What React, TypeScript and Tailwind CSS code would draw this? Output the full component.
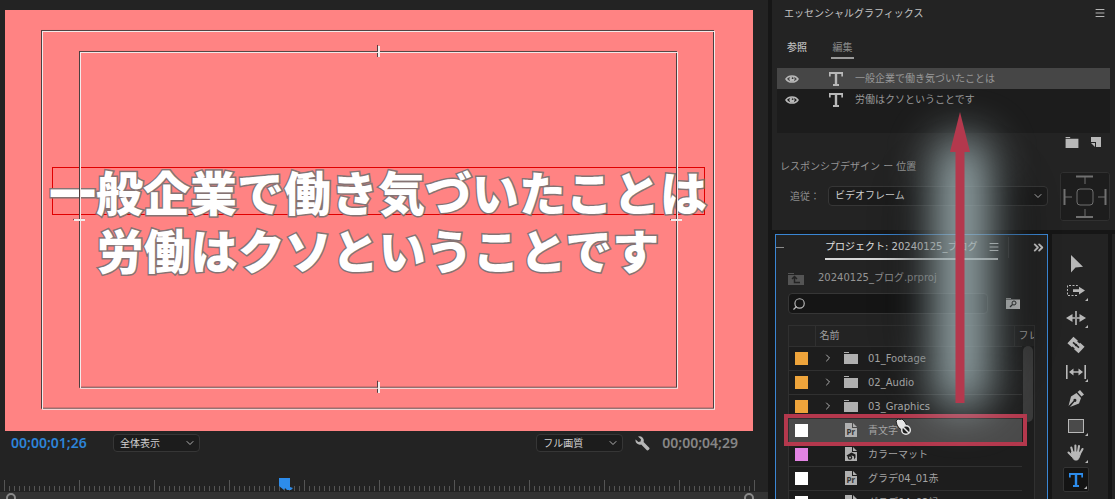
import React from "react";
import { ChevronDown, ChevronRight, ChevronsRight, Menu, Search } from "lucide-react";

interface IconProps {
  className?: string;
}

interface DropdownProps {
  label: string;
  options: string[];
  className: string;
}

interface BinItem {
  name: string;
  kind: "folder" | "project" | "matte";
  swatch: string;
  selected?: boolean;
}

interface Tool {
  name: string;
  more: boolean;
  icon: React.ReactNode;
}

const layers = ["一般企業で働き気づいたことは", "労働はクソということです"];

const items: BinItem[] = [
  { name: "01_Footage", kind: "folder", swatch: "bg-[#eea43b]" },
  { name: "02_Audio", kind: "folder", swatch: "bg-[#eea43b]" },
  { name: "03_Graphics", kind: "folder", swatch: "bg-[#eea43b]" },
  { name: "青文字", kind: "project", swatch: "bg-white", selected: true },
  { name: "カラーマット", kind: "matte", swatch: "bg-[#e384e3]" },
  { name: "グラデ04_01赤", kind: "project", swatch: "bg-white" },
  { name: "グラデ04_02緑", kind: "project", swatch: "bg-white" },
];

const FolderIcon: React.FC<IconProps> = ({ className }) => (
  <svg viewBox="0 0 14 12" className={className} fill="currentColor" aria-hidden="true">
    <path d="M0 0h5v1H0zM0 2h14v10H0z" />
  </svg>
);

const TypeIcon: React.FC<IconProps> = ({ className }) => (
  <svg viewBox="0 0 14 14" className={className} fill="none" stroke="currentColor" aria-hidden="true">
    <path d="M.8 4.500V1h12.400v3.500M4 13h6" strokeWidth="1.800" />
    <path d="M7 1v12" strokeWidth="2.400" />
  </svg>
);

const EyeIcon: React.FC = () => (
  <svg viewBox="0 0 14 10" className="h-[10px] w-[14px]" aria-hidden="true">
    <path d="M1 5C3.500.9 10.500.9 13 5C10.500 9.100 3.500 9.100 1 5Z" fill="none" stroke="#b8b8b8" strokeWidth="1.500" />
    <circle cx="7" cy="5" r="2.600" fill="#b8b8b8" />
    <circle cx="7.600" cy="4.200" r=".9" fill="#333" />
  </svg>
);

const WrenchIcon: React.FC = () => (
  <svg viewBox="0 0 15 15" className="h-[15px] w-[15px]" aria-hidden="true">
    <path
      d="M3 .6a4.300 4.300 0 0 1 5.600 5.300l5.900 6.100c.6.7-1.700 3-2.400 2.400L6.200 8.400A4.300 4.300 0 0 1 .6 3.400l2.800 2.500 2.200-.5.400-2.200z"
      fill="#b5b5b5"
    />
  </svg>
);

const FileIcon: React.FC<{ kind: "project" | "matte" }> = ({ kind }) => (
  <svg viewBox="0 0 12 14" className="h-[14px] w-[12px]" aria-hidden="true">
    <path d="M0 0h7v5h5v9H0zM8 0l4 4H8z" fill="#b0b0b0" />
    {kind === "project" ? (
      <text x="1.500" y="11.500" fontSize="8" fontWeight="700" fill="#333" className="font-['Noto_Sans',sans-serif]">
        Pr
      </text>
    ) : (
      <g fill="#1d1d1d">
        <path d="M6.500 5.500l4 2v3L9 12.500V9.500L7 8.500 3 10 1.500 8.500z" />
        <circle cx="5" cy="10.500" r="2.200" />
        <circle cx="5" cy="10.400" r="1" fill="#b0b0b0" />
      </g>
    )}
  </svg>
);

const tools: Tool[] = [
  { name: "選択ツール", more: false, icon: <path d="M5 1v17.500l4.500-5 7.500-.7z" fill="#b8b8b8" /> },
  {
    name: "トラックの前方選択ツール",
    more: true,
    icon: (
      <g>
        <path d="M11.500 5V4.500h-10v10h10V14" fill="none" stroke="#b8b8b8" strokeDasharray="2 1.500" />
        <path d="M7 8.300h6V5.800l6 3.800-6 3.800v-2.500H7z" fill="#b8b8b8" />
      </g>
    ),
  },
  {
    name: "リップルツール",
    more: true,
    icon: (
      <path
        d="M9.200 3h1.600v14H9.200zM0 10l6.500-4v3.200h2.500v1.600H6.500V14zM20 10l-6.500-4v3.200H11v1.600h2.500V14z"
        fill="#b8b8b8"
      />
    ),
  },
  {
    name: "レーザーツール",
    more: false,
    icon: (
      <g transform="rotate(42 10 10)">
        <path d="M2.500 5.500h6v1h3v-1h6v9h-6v-1h-3v1h-6z" fill="#b8b8b8" />
        <path d="M6 10h8" stroke="#232323" strokeWidth="1.500" />
        <circle cx="10" cy="10" r="1.200" fill="#232323" />
      </g>
    ),
  },
  {
    name: "スリップツール",
    more: true,
    icon: (
      <path
        d="M0 3h1.600v14H0zM18.400 3H20v14h-1.600zM3 10l4.500-3.500v2.700h5V6.500L17 10l-4.500 3.500v-2.700h-5v2.700z"
        fill="#b8b8b8"
      />
    ),
  },
  {
    name: "ペンツール",
    more: false,
    icon: (
      <g>
        <path d="M11.500 3l2.500-2 4 4.500-2.500 2zM10.500 4l4.500 5-2 5.500L4 18l4.500-5.200a1.500 1.500 0 1 0-1-1L2.500 17 5 7.500z" fill="#b8b8b8" />
      </g>
    ),
  },
  {
    name: "長方形ツール",
    more: true,
    icon: <rect x="2.500" y="3.500" width="15" height="13" fill="#4a4a4a" stroke="#b8b8b8" />,
  },
  {
    name: "手のひらツール",
    more: true,
    icon: (
      <g stroke="#b8b8b8" strokeLinecap="round" fill="#b8b8b8">
        <path
          d="M6.800 10L5.300 4.500M9.400 9V2.500M12 9l1-6M14 10.500l2.500-4.500M6 13l-3.500-3.500"
          strokeWidth="2.100"
          fill="none"
        />
        <path d="M6 9h7.500l.8 2c-.5 2.500-1.300 4.500-2.800 6h-3C7 15.500 6 14 5.200 12z" />
      </g>
    ),
  },
];

const Dropdown: React.FC<DropdownProps> = ({ label, options, className }) => (
  <div className={`relative ${className}`}>
    <select
      aria-label={label}
      className="block h-full w-full appearance-none rounded-sm border border-[#363636] bg-[#1c1c1c] px-1.5 leading-4 text-[#d0d0d0]"
    >
      {options.map((option) => (
        <option key={option}>{option}</option>
      ))}
    </select>
    <ChevronDown size={12} strokeWidth={2} className="pointer-events-none absolute inset-y-0 right-1 my-auto text-[#b0b0b0]" />
  </div>
);

const SafeMargins: React.FC = () => (
  <svg
    viewBox="0 0 748 421"
    preserveAspectRatio="none"
    shapeRendering="crispEdges"
    className="absolute inset-0 h-full w-full"
    fill="none"
    aria-hidden="true"
  >
    <g stroke="#4d4040">
      <rect x="36.500" y="20.500" width="672" height="378" />
      <rect x="74.500" y="41.500" width="597" height="336" />
      <path d="M372.500 35v12M372.500 371v12M68 209.500h12M665 209.500h12" />
    </g>
    <g stroke="#f4eaea">
      <rect x="37.500" y="21.500" width="672" height="378" />
      <rect x="75.500" y="42.500" width="597" height="336" />
      <path d="M373.500 36v11M373.500 372v11M69 210.500h11M666 210.500h11" strokeWidth="2" />
    </g>
  </svg>
);

const Ruler: React.FC = () => {
  const ticks = Array.from({ length: 151 }, (_, i) => i);
  return (
    <div className="relative mt-6 h-3">
      <svg className="h-3 w-full" shapeRendering="crispEdges" stroke="#555" aria-hidden="true">
        {ticks.map((i) => (
          <line key={i} x1={4.5 + i * 5} x2={4.5 + i * 5} y1={i % 15 === 0 ? 0 : 6} y2={11} />
        ))}
      </svg>
      <svg viewBox="0 0 14 13" className="absolute -top-0.5 left-[279px] h-[13px] w-[14px]" fill="#2d8ceb" aria-hidden="true">
        <path d="M0 0h11v9l3 1-2 2H8l-2-2-1 2-5-4z" />
      </svg>
    </div>
  );
};

const ProgramMonitor: React.FC = () => (
  <main className="flex min-w-0 flex-1 flex-col bg-[#232323] pt-2.5">
    <div className="relative mr-[15px] ml-[5px] flex aspect-video shrink-0 flex-col items-center justify-center gap-2.5 bg-[#ff8383] pr-0.5">
      {layers.map((text, i) => (
        <p
          key={text}
          className={`flex h-12 items-center justify-center border font-['Noto_Sans_CJK_JP',sans-serif] text-[47px] leading-[46px] font-black whitespace-nowrap text-white [-webkit-text-stroke:3px_#857474] [paint-order:stroke_fill] ${
            i === 0 ? "w-[653px] border-[#e00000]" : "border-transparent"
          }`}
        >
          {text}
        </p>
      ))}
      <SafeMargins />
    </div>
    <div className="mr-[30px] ml-[11px] flex h-[25px] shrink-0 items-center font-['Noto_Sans',sans-serif]">
      <span className="w-[102px] text-sm font-semibold text-[#2d84d8]">00;00;01;26</span>
      <Dropdown label="ズームレベル" options={["全体表示", "50%", "100%"]} className="h-[18px] w-[87px] font-['Noto_Sans_CJK_JP',sans-serif]" />
      <Dropdown label="再生時の解像度" options={["フル画質", "1/2", "1/4"]} className="ml-auto h-[18px] w-[87px] font-['Noto_Sans_CJK_JP',sans-serif]" />
      <button type="button" aria-label="設定" className="ml-3">
        <WrenchIcon />
      </button>
      <span className="ml-3 text-sm font-semibold text-[#868686]">00;00;04;29</span>
    </div>
    <Ruler />
    <div className="flex min-h-1 flex-1 items-start justify-between overflow-hidden bg-[#333] pr-[14px] pl-1.5">
      <span className="mt-px h-2.5 w-2.5 rounded-full border-2 border-[#8a8a8a]" />
      <span className="mt-px h-2.5 w-2.5 rounded-full border-2 border-[#8a8a8a]" />
    </div>
  </main>
);

const EssentialGraphics: React.FC = () => (
  <section className="shrink-0 bg-[#232323] pb-[9px]">
    <header className="flex h-[26px] items-center justify-between pr-[9px] pl-3">
      <h2 className="text-[#c4c4c4]">エッセンシャルグラフィックス</h2>
      <button type="button" aria-label="パネルメニュー">
        <Menu size={12} strokeWidth={2} className="text-[#b5b5b5]" />
      </button>
    </header>
    <div className="flex gap-6 pt-3.5 pb-[9px] pl-[15px] leading-4">
      <button type="button" className="border-b-2 border-transparent pb-px font-medium text-[#c0c0c0]">
        参照
      </button>
      <button type="button" className="w-[23px] border-b-2 border-[#9a9a9a] pb-px text-[#8a8a8a]">
        編集
      </button>
    </div>
    <ul className="mx-[5px] min-h-[65px] bg-[#1c1c1c]">
      {layers.map((text, i) => (
        <li key={text} className={`flex h-[21px] items-center pl-2 ${i === 0 ? "bg-[#464646]" : ""}`}>
          <button type="button" aria-label="表示">
            <EyeIcon />
          </button>
          <TypeIcon className="ml-[30px] h-3.5 w-3.5 text-[#b8b8b8]" />
          <span className="ml-3 text-[#989898]">{text}</span>
        </li>
      ))}
    </ul>
    <div className="flex h-[18px] items-center justify-end gap-3 pr-3.5 text-[#b8b8b8]">
      <button type="button" aria-label="新規グループ">
        <FolderIcon className="h-[11px] w-[14px]" />
      </button>
      <button type="button" aria-label="新規レイヤー">
        <svg viewBox="0 0 10 10" className="h-2.5 w-2.5" fill="currentColor" aria-hidden="true">
          <path d="M0 0h10v10H5V5H0zM0 6h4v4z" />
        </svg>
      </button>
    </div>
    <div className="flex gap-3 pr-[5px] pl-2">
      <div className="min-w-0 flex-1">
        <h3 className="mt-2 leading-4 text-[#959595]">レスポンシブデザイン ー 位置</h3>
        <div className="mt-[11px] flex items-center text-[#8c8c8c]">
          <span className="w-12 pl-2.5">追従：</span>
          <Dropdown label="追従" options={["ビデオフレーム"]} className="h-5 flex-1" />
        </div>
      </div>
      <svg viewBox="0 0 50 49" className="mt-[21px] h-[49px] w-[50px] rounded-xs bg-[#1d1d1d]" fill="none" stroke="#707070" aria-hidden="true">
        <rect x=".5" y=".5" width="49" height="48" rx="2" stroke="#303030" />
        <rect x="17" y="17" width="16" height="16" rx="3" />
        <path d="M25 5v7M25 37v8M5 25h7M38 25h7" />
        <path d="M16 4.500h17M16 45h17M4.500 17v16M45.500 17v16" strokeWidth="2" />
      </svg>
    </div>
  </section>
);

const BinRow: React.FC<{ item: BinItem }> = ({ item }) => (
  <tr className={`h-6 border-b border-[#303030] ${item.selected ? "bg-[#4a4a4a]" : "bg-[#1d1d1d]"}`}>
    <td className="p-0">
      <span className={`ml-1.5 block h-[13px] w-[13px] ${item.swatch}`} />
    </td>
    <td className="p-0" colSpan={2}>
      <span className="flex items-center pl-[7px]">
        <span className="w-[22px]">
          {item.kind === "folder" && <ChevronRight size={12} strokeWidth={2} className="text-[#b0b0b0]" />}
        </span>
        <span className="flex w-6 items-center text-[#b0b0b0]">
          {item.kind === "folder" ? (
            <FolderIcon className="h-3 w-3.5" />
          ) : (
            <span className="pl-px">
              <FileIcon kind={item.kind} />
            </span>
          )}
        </span>
        <span className="whitespace-nowrap text-[#a4a4a4]">{item.name}</span>
      </span>
    </td>
  </tr>
);

const DragCursor: React.FC = () => (
  <svg viewBox="0 0 17 18" className="absolute top-[92px] left-[106px] h-[18px] w-[17px]" aria-hidden="true">
    <path d="M1 3l2-2 2 .5L7 1l3 3 2 4-4 5-4-3-2-3z" fill="#e6e6e6" stroke="#222" />
    <circle cx="11" cy="12" r="4.300" fill="#1d1d1d" stroke="#e6e6e6" strokeWidth="1.500" />
    <path d="M8 9l6 6" stroke="#e6e6e6" strokeWidth="1.500" />
  </svg>
);

const ProjectPanel: React.FC = () => (
  <section className="min-w-0 flex-1 overflow-hidden border border-b-0 border-[#3a86d4] bg-[#232323]">
    <header className="flex h-[25px] items-stretch">
      <span className="mt-3 h-px w-2 bg-[#8a8a8a]" />
      <div className="ml-[41px] flex w-[173px] items-center justify-between border-b-2 border-[#d8d8d8]">
        <h2 className="whitespace-nowrap text-[#e0e0e0]">プロジェクト: 20240125_ブログ</h2>
        <button type="button" aria-label="パネルメニュー" className="-mr-0.5">
          <Menu size={12} strokeWidth={2} className="text-[#e0e0e0]" />
        </button>
      </div>
      <span className="mt-0.5 mb-0.5 ml-2.5 w-px bg-[#3a3a3a]" />
      <button type="button" aria-label="その他のパネル" className="ml-auto pr-px">
        <ChevronsRight size={15} strokeWidth={3} className="text-[#c0c0c0]" />
      </button>
    </header>
    <div className="mt-2 flex h-[18px] items-center pl-3 text-[#959595]">
      <svg viewBox="0 0 16 12" className="mt-1 h-3 w-4" aria-hidden="true">
        <path d="M0 0h6v1H0zM0 2h16v10H0z" fill="#545454" />
        <path d="M4 6l2.500-2.500L9 6M6.500 4v5.500H12" fill="none" stroke="#232323" strokeWidth="1.500" />
      </svg>
      <span className="ml-3.5">20240125_ブログ.prproj</span>
    </div>
    <div className="mt-[7px] flex items-center pl-3">
      <div className="relative w-[200px]">
        <Search size={14} strokeWidth={2} className="absolute top-1 left-1 -scale-x-100 text-[#b8b8b8]" />
        <input
          type="text"
          aria-label="検索"
          className="block h-[21px] w-full rounded-sm border border-[#363636] bg-[#151515] pl-6 text-[#c8c8c8]"
        />
      </div>
      <button type="button" aria-label="検索ビン" className="ml-[18px]">
        <svg viewBox="0 0 14 11" className="h-[11px] w-3.5" aria-hidden="true">
          <path d="M0 0h5v.8H0zM0 1.500h14V11H0z" fill="#d0d0d0" />
          <circle cx="8" cy="5" r="2" fill="none" stroke="#232323" />
          <path d="M6.500 6.500L4 9" stroke="#232323" strokeWidth="1.300" />
        </svg>
      </button>
    </div>
    <div className="relative mt-[11px] mr-3 ml-3 border border-[#303030]">
      <div className="overflow-hidden">
        <table className="w-full table-fixed border-collapse text-left">
          <colgroup>
            <col className="w-[26px]" />
            <col />
            <col className="w-5" />
          </colgroup>
          <thead>
            <tr className="h-5 border-b border-[#303030]">
              <th className="border-r border-[#303030] p-0" aria-label="ラベル" />
              <th className="border-r border-[#303030] py-0 pr-0 pl-1 font-normal text-[#a0a0a0]">名前</th>
              <th className="overflow-hidden py-0 pr-0 pl-1 font-normal whitespace-nowrap text-[#a0a0a0]">フレ</th>
            </tr>
          </thead>
          <tbody>
            {items.map((item) => (
              <BinRow key={item.name} item={item} />
            ))}
          </tbody>
        </table>
      </div>
      <div className="absolute top-5 right-0 bottom-0 w-3 bg-[#1d1d1d]">
        <div className="ml-px h-[76px] w-2.5 rounded-full bg-[#3a3a3a]" />
      </div>
      <div className="absolute top-[88px] right-[7px] -left-[5px] h-8 border-4 border-[#b4384d]" />
      <DragCursor />
    </div>
  </section>
);

const CornerMark: React.FC = () => (
  <svg viewBox="0 0 3 3" className="absolute right-px bottom-0.5 h-[3px] w-[3px]" aria-hidden="true">
    <path d="M3 0v3H0z" fill="#b8b8b8" />
  </svg>
);

const ToolBar: React.FC = () => (
  <nav aria-label="ツール" className="flex w-14 flex-col gap-0.5 bg-[#232323] pt-[17px] pl-[11px]">
    {tools.map(({ name, more, icon }) => (
      <button key={name} type="button" aria-label={name} className="relative flex h-[25px] w-[26px] shrink-0 items-center justify-center">
        <svg viewBox="0 0 20 20" className="h-5 w-5" aria-hidden="true">
          {icon}
        </svg>
        {more && <CornerMark />}
      </button>
    ))}
    <button
      type="button"
      aria-label="横書き文字ツール"
      className="relative flex h-[25px] w-[26px] shrink-0 items-center justify-center rounded-xs border border-[#343434] bg-[#141414]"
    >
      <TypeIcon className="h-3.5 w-3.5 text-[#2d8ceb]" />
      <CornerMark />
    </button>
  </nav>
);

const DragArrow: React.FC = () => (
  <div className="pointer-events-none absolute top-28 left-[178px] h-[291px] w-5">
    <div className="absolute top-10 -right-14 bottom-4 -left-12 rounded-full bg-black/35 blur-lg" />
    <div className="absolute top-6 -right-5 -bottom-2 -left-4 rounded-full bg-[#b6cccf]/80 blur-[22px]" />
    <svg viewBox="0 0 20 291" className="absolute inset-0 h-full w-full" aria-hidden="true">
      <path d="M10 0l10 40h-5.500v251h-9V40H0z" fill="#b4384d" />
    </svg>
  </div>
);

const App: React.FC = () => {
  return (
    <div className="flex h-screen gap-1 overflow-hidden bg-[#161616] font-['DejaVu_Sans','Noto_Sans_CJK_JP',sans-serif] text-[10px]">
      <ProgramMonitor />
      <aside className="relative flex w-[343px] shrink-0 flex-col gap-1">
        <EssentialGraphics />
        <div className="flex min-h-0 flex-1 gap-1 pl-[3px]">
          <ProjectPanel />
          <ToolBar />
          <div className="w-[3px] bg-[#232323]" />
        </div>
        <DragArrow />
      </aside>
    </div>
  );
};

export default App;
